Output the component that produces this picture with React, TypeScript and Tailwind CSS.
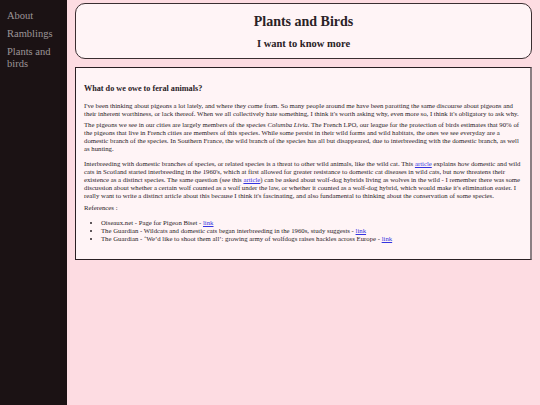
import React from 'react';

function A({ children }: { children: React.ReactNode }) {
  return (
    <a href="#" className="text-[#3434e0] underline">
      {children}
    </a>
  );
}

export default function App() {
  return (
    <div className="flex min-h-screen bg-[#fddce2] font-['Liberation_Serif','Times_New_Roman',serif] text-[#2a2226]">
      {/* Sidebar */}
      <nav className="w-[67px] shrink-0 bg-[#1b1214] px-[7px] pt-[10px]">
        <ul className="flex flex-col gap-[6px] text-[10.5px] leading-[12px] text-[#9d9597]">
          <li>About</li>
          <li>Ramblings</li>
          <li>Plants and birds</li>
        </ul>
      </nav>

      <main className="flex-1 px-[8px] pt-[3px]">
        {/* Header */}
        <header className="flex h-[56px] flex-col items-center rounded-[10px] border-[1.5px] border-[#3a2e31] bg-[#fff4f6] pt-[9.5px]">
          <h1 className="text-[14px] font-bold leading-[16px]">Plants and Birds</h1>
          <h2 className="mt-[8px] text-[10.5px] font-bold leading-[12px]">I want to know more</h2>
        </header>

        {/* Article */}
        <article className="mt-[8px] border border-r-2 border-[#2a2024] border-r-[#8a7f83] bg-[#fff4f6] pl-[8px] pr-[6px] pt-[16px] pb-[16px] text-[6.75px] leading-[8.1px]">
          <h3 className="mb-[8px] text-[8.2px] font-bold leading-[10px]">What do we owe to feral animals?</h3>
          <p className="mb-[3px]">
            I've been thinking about pigeons a lot lately, and where they come from. So many people around me have
            been parotting the same discourse about pigeons and their inherent worthiness, or lack thereof. When we
            all collectively hate something, I think it's worth asking why, even more so, I think it's obligatory to
            ask why.
          </p>
          <p className="mb-[6px]">
            The pigeons we see in our cities are largely members of the species <i>Columba Livia</i>. The French LPO,
            our league for the protection of birds estimates that 90% of the pigeons that live in French cities are
            members of this species. While some persist in their wild forms and wild habitats, the ones we see
            everyday are a domestic branch of the species. In Southern France, the wild branch of the species has all
            but disappeared, due to interbreeding with the domestic branch, as well as hunting.
          </p>
          <p className="mb-[3.5px]">
            Interbreeding with domestic branches of species, or related species is a threat to other wild animals,
            like the wild cat. This <A>article</A> explains how domestic and wild cats in Scotland started
            interbreeding in the 1960's, which at first allowed for greater resistance to domestic cat diseases in
            wild cats, but now threatens their existence as a distinct species. The same question (see this{' '}
            <A>article</A>) can be asked about wolf-dog hybrids living as wolves in the wild - I remember there was
            some discussion about whether a certain wolf counted as a wolf under the law, or whether it counted as a
            wolf-dog hybrid, which would make it's elimination easier. I really want to write a distinct article about
            this because I think it's fascinating, and also fundamental to thinking about the conservation of some
            species.
          </p>
          <p className="mb-[7px]">References :</p>
          <ul className="list-disc pl-[17px]">
            <li>
              Oiseaux.net - Page for Pigeon Biset - <A>link</A>
            </li>
            <li>
              The Guardian - Wildcats and domestic cats began interbreeding in the 1960s, study suggests - <A>link</A>
            </li>
            <li>
              The Guardian - ‘We’d like to shoot them all’: growing army of wolfdogs raises hackles across Europe -{' '}
              <A>link</A>
            </li>
          </ul>
        </article>
      </main>
    </div>
  );
}
